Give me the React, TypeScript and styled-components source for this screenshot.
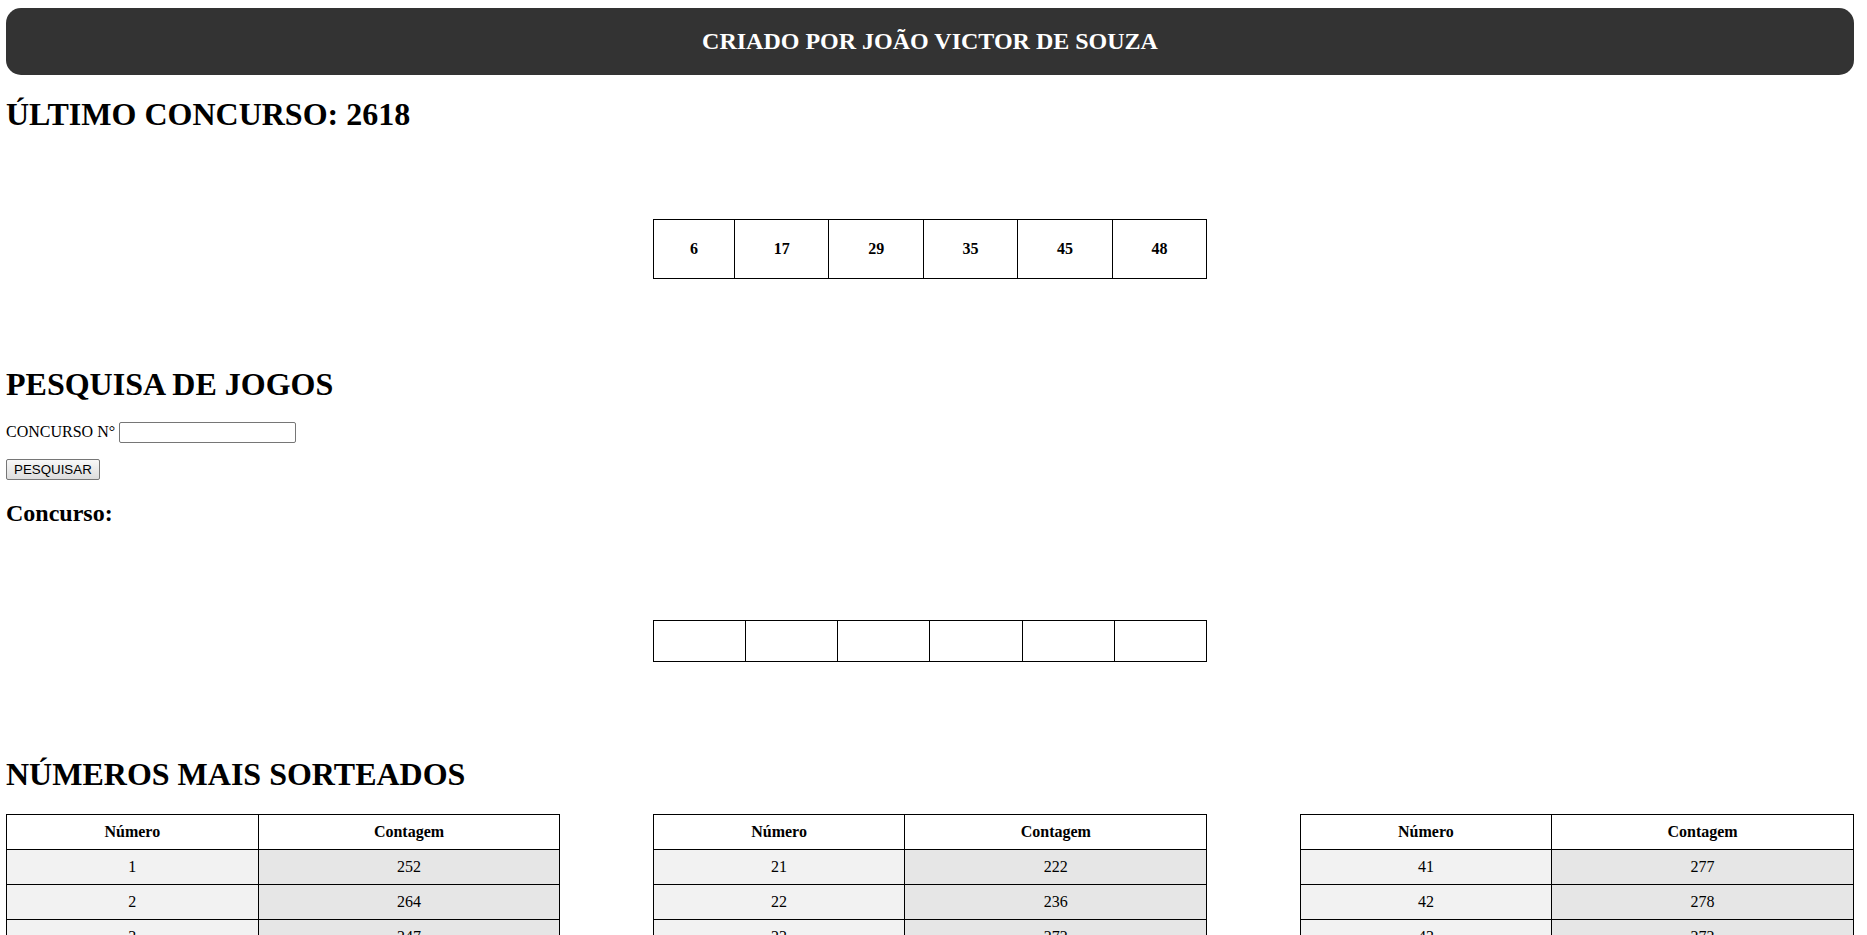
import React from "react";
import styled, { createGlobalStyle } from "styled-components";

const GlobalStyle = createGlobalStyle`
  html::-webkit-scrollbar { width: 5px; }
  html::-webkit-scrollbar-track { background: #f1f1f1; }
  html::-webkit-scrollbar-thumb { background: #c1c1c1; }
  body {
    margin: 0;
    background: #ffffff;
    color: #000000;
    font-family: "Liberation Serif", "Times New Roman", serif;
    font-size: 16px;
  }
`;

const Page = styled.div`
  width: 1848px;
  padding: 8px 0 8px 6px;
`;

const Header = styled.header`
  background: #333333;
  border-radius: 15px;
  padding: 20px 0;
  text-align: center;
`;

const HeaderTitle = styled.h2`
  margin: 0;
  color: #ffffff;
  font-size: 24px;
  font-weight: bold;
  line-height: 27px;
`;

const Title = styled.h1`
  margin: 21.44px 0;
  font-size: 32px;
  font-weight: bold;
  line-height: 36.5px;
`;

const SubTitle = styled.h2`
  margin: 19.92px 0;
  font-size: 24px;
  font-weight: bold;
  line-height: 27px;
`;

const DrawArea = styled.div<{ $h: number }>`
  height: ${(p) => p.$h}px;
  display: flex;
  align-items: center;
  justify-content: center;
`;

const DrawTable = styled.table`
  width: 30%;
  border-collapse: collapse;
`;

const DrawCell = styled.td`
  border: 1px solid #000000;
  padding: 20px;
  text-align: center;
  font-weight: bold;
  font-size: 16px;
`;

const EmptyCell = styled.td`
  border: 1px solid #000000;
  padding: 20px;
  width: 16.66%;
`;

const SearchForm = styled.form`
  margin: -2px 0 0;
`;

const FormRow = styled.div`
  display: flex;
  align-items: center;
  gap: 4px;
  margin: 16px 0;
`;

const Label = styled.label`
  font-size: 16px;
`;

const Input = styled.input`
  box-sizing: border-box;
  width: 177px;
  height: 21px;
  padding: 1px 2px;
  border: 1px solid #767676;
  border-radius: 2px;
  font-family: "Liberation Sans", Arial, sans-serif;
  font-size: 13.33px;
  background: #ffffff;
`;

const Button = styled.button`
  box-sizing: border-box;
  height: 21px;
  padding: 1px 7px;
  border: 1px solid #767676;
  border-radius: 2px;
  background: linear-gradient(#f8f8f8, #dddddd);
  font-family: "Liberation Sans", Arial, sans-serif;
  font-size: 13.33px;
  color: #000000;
  line-height: 15px;
`;

const StatsRow = styled.div`
  display: flex;
  justify-content: space-between;
  align-items: flex-start;
`;

const StatsTable = styled.table`
  width: 30%;
  border-collapse: collapse;
`;

const HeadCell = styled.th`
  border: 1px solid #000000;
  padding: 8px;
  text-align: center;
  font-weight: bold;
  background: #ffffff;
`;

const BodyCell = styled.td<{ $shade: string }>`
  border: 1px solid #000000;
  padding: 8px;
  text-align: center;
  background: ${(p) => p.$shade};
`;

const lastDraw = [6, 17, 29, 35, 45, 48];

const counts: number[] = [
  252, 264, 247, 283, 290, 260, 249, 268, 250, 303,
  268, 252, 265, 257, 237, 260, 277, 257, 248, 255,
  222, 236, 272, 262, 243, 229, 273, 262, 251, 278,
  245, 271, 283, 273, 276, 272, 286, 279, 258, 256,
  277, 278, 272, 275, 249, 269, 260, 256, 265, 254,
  276, 268, 297, 279, 240, 274, 243, 246, 270, 261,
];

const groups = [0, 20, 40].map((start) =>
  counts.slice(start, start + 20).map((c, i) => ({ n: start + i + 1, c }))
);

export default function App() {
  return (
    <>
      <GlobalStyle />
      <Page>
        <Header>
          <HeaderTitle>CRIADO POR JOÃO VICTOR DE SOUZA</HeaderTitle>
        </Header>

        <Title>ÚLTIMO CONCURSO: 2618</Title>
        <DrawArea $h={190}>
          <DrawTable>
            <tbody>
              <tr>
                {lastDraw.map((n) => (
                  <DrawCell key={n}>{n}</DrawCell>
                ))}
              </tr>
            </tbody>
          </DrawTable>
        </DrawArea>

        <Title>PESQUISA DE JOGOS</Title>
        <SearchForm onSubmit={(e) => e.preventDefault()}>
          <FormRow>
            <Label htmlFor="concurso">CONCURSO N°</Label>
            <Input id="concurso" type="text" />
          </FormRow>
          <FormRow>
            <Button type="button">PESQUISAR</Button>
          </FormRow>
        </SearchForm>
        <SubTitle>Concurso:</SubTitle>
        <DrawArea $h={188}>
          <DrawTable>
            <tbody>
              <tr>
                {Array.from({ length: 6 }).map((_, i) => (
                  <EmptyCell key={i} />
                ))}
              </tr>
            </tbody>
          </DrawTable>
        </DrawArea>

        <Title>NÚMEROS MAIS SORTEADOS</Title>
        <StatsRow>
          {groups.map((g, gi) => (
            <StatsTable key={gi}>
              <thead>
                <tr>
                  <HeadCell>Número</HeadCell>
                  <HeadCell>Contagem</HeadCell>
                </tr>
              </thead>
              <tbody>
                {g.map((row) => (
                  <tr key={row.n}>
                    <BodyCell $shade="#f2f2f2">{row.n}</BodyCell>
                    <BodyCell $shade="#e6e6e6">{row.c}</BodyCell>
                  </tr>
                ))}
              </tbody>
            </StatsTable>
          ))}
        </StatsRow>
      </Page>
    </>
  );
}
